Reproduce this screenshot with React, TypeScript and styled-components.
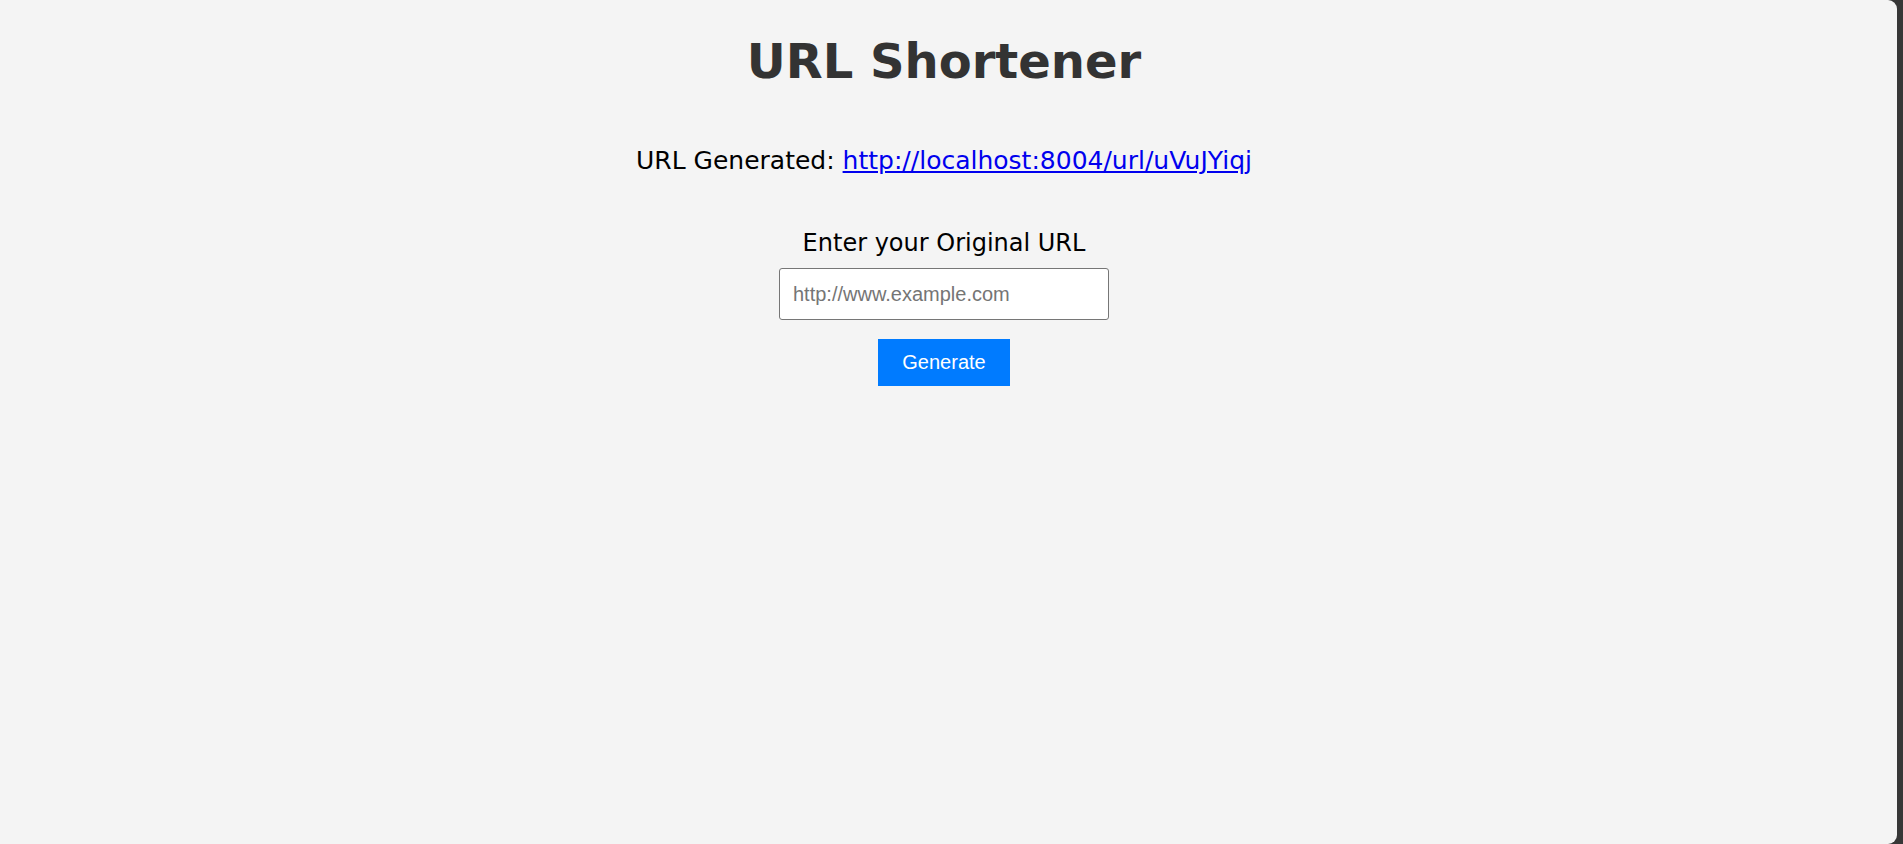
import React from "react";
import styled, { createGlobalStyle } from "styled-components";

const GlobalStyle = createGlobalStyle`
  html, body {
    margin: 0;
    padding: 0;
    background: #373737;
    overflow: hidden;
  }
  * { box-sizing: border-box; }
`;

const Frame = styled.div`
  height: 100vh;
  margin-right: 6px;
  padding-right: 9px;
  background: #f4f4f4;
  border-radius: 0 9px 9px 0;
  display: flex;
  flex-direction: column;
  align-items: center;
  font-family: "DejaVu Sans", Verdana, sans-serif;
`;

const Title = styled.h1`
  margin: 33px 0 0;
  font-size: 48px;
  line-height: 56px;
  font-weight: 700;
  color: #333333;
`;

const Result = styled.p`
  margin: 57px 0 0;
  font-size: 25px;
  line-height: 29px;
  color: #000;
`;

const Link = styled.a`
  color: #0000ee;
  text-decoration: underline;
`;

const Form = styled.form`
  margin-top: 54px;
  display: flex;
  flex-direction: column;
  align-items: center;
`;

const Label = styled.label`
  font-size: 24px;
  line-height: 28px;
  color: #000;
`;

const Input = styled.input`
  margin-top: 11px;
  width: 330px;
  height: 52px;
  padding: 0 13px;
  border: 1px solid #767676;
  border-radius: 3px;
  background: #fff;
  font-family: "Liberation Sans", Arial, sans-serif;
  font-size: 20px;
  color: #000;
  &::placeholder {
    color: #757575;
  }
`;

const Button = styled.button`
  margin-top: 19px;
  width: 132px;
  height: 47px;
  border: none;
  border-radius: 0;
  background: #007bff;
  color: #fff;
  font-family: "Liberation Sans", Arial, sans-serif;
  font-size: 20px;
  cursor: pointer;
`;

export default function App() {
  return (
    <>
      <GlobalStyle />
      <Frame>
        <Title>URL Shortener</Title>
        <Result>
          URL Generated:{" "}
          <Link href="http://localhost:8004/url/uVuJYiqj">
            http://localhost:8004/url/uVuJYiqj
          </Link>
        </Result>
        <Form onSubmit={(e) => e.preventDefault()}>
          <Label htmlFor="url">Enter your Original URL</Label>
          <Input id="url" type="text" placeholder="http://www.example.com" />
          <Button type="submit">Generate</Button>
        </Form>
      </Frame>
    </>
  );
}
